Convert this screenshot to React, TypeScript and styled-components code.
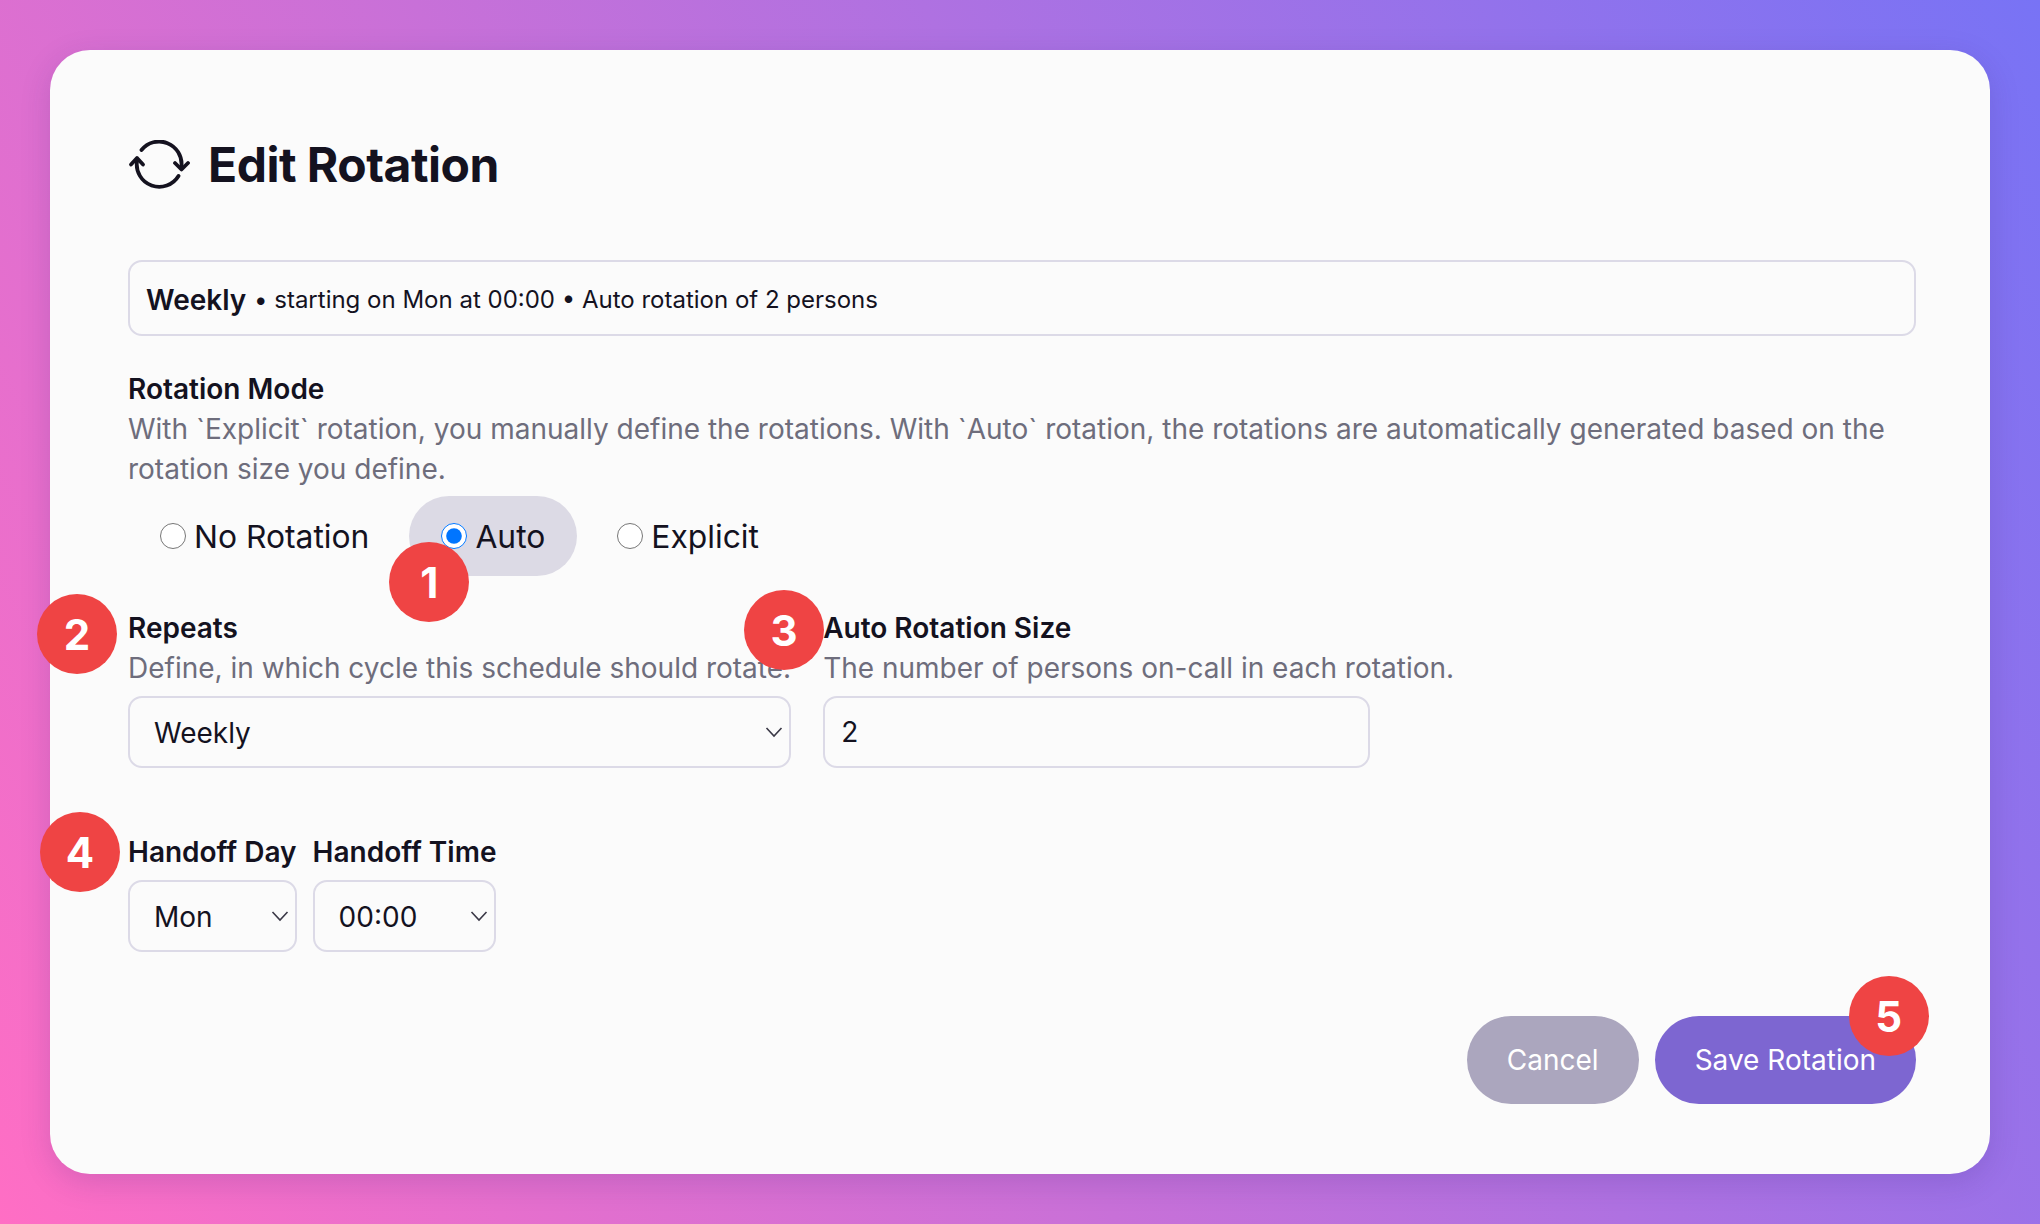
import styled, { createGlobalStyle } from 'styled-components';

const INK = '#14121f';
const MUTED = '#6e6d7c';
const LINE = '#dcdae7';

const GlobalStyle = createGlobalStyle`
  html, body {
    margin: 0;
    padding: 0;
  }
  body {
    font-family: 'Inter', 'Liberation Sans', sans-serif;
    color: ${INK};
  }
  * {
    box-sizing: border-box;
  }
`;

const Page = styled.div`
  width: 2040px;
  height: 1224px;
  padding: 50px;
  background: linear-gradient(60deg, #ff6ec4, #7873f5);
`;

const Card = styled.div`
  height: 1124px;
  padding: 85px 74px 0 78px;
  background: #fbfbfb;
  border-radius: 40px;
  box-shadow: 0 8px 30px rgba(60, 40, 120, 0.18);
`;

const TitleRow = styled.div`
  display: flex;
  align-items: center;
  gap: 18px;
  height: 60px;
  margin-bottom: 65px;
`;

const Title = styled.h1`
  margin: 0;
  font-size: 48px;
  line-height: 58px;
  font-weight: 700;
  letter-spacing: -0.5px;
`;

const Summary = styled.div`
  display: flex;
  align-items: center;
  height: 76px;
  padding: 3px 16px 0;
  border: 2px solid ${LINE};
  border-radius: 14px;
  font-size: 24px;
  white-space: pre;
`;

const SummaryStrong = styled.strong`
  margin-right: 1px;
  font-size: 28px;
  font-weight: 600;
`;

const Label = styled.div`
  font-size: 28px;
  line-height: 40px;
  font-weight: 600;
  white-space: nowrap;
`;

const Hint = styled.div`
  font-size: 28px;
  line-height: 40px;
  color: ${MUTED};
`;

const Section = styled.div`
  margin-top: 33px;
`;

const RadioRow = styled.div`
  display: flex;
  gap: 8px;
  margin-top: 7px;
`;

const RadioItem = styled.label<{ $active?: boolean }>`
  position: relative;
  display: flex;
  align-items: center;
  gap: 8px;
  height: 80px;
  padding: 0 32px;
  border-radius: 40px;
  font-size: 31.8px;
  background: ${({ $active }) => ($active ? '#dcdae5' : 'transparent')};
`;

const RadioInput = styled.input`
  width: 26px;
  height: 26px;
  margin: 0;
`;

const FieldRow = styled.div<{ $gap: number; $top: number }>`
  display: flex;
  gap: ${({ $gap }) => $gap}px;
  margin-top: ${({ $top }) => $top}px;
`;

const Field = styled.div`
  position: relative;
`;

const SelectWrap = styled.div<{ $top: number; $height: number; $width?: number }>`
  position: relative;
  margin-top: ${({ $top }) => $top}px;
  height: ${({ $height }) => $height}px;
  width: ${({ $width }) => ($width ? `${$width}px` : 'auto')};
`;

const Select = styled.select`
  appearance: none;
  width: 100%;
  height: 100%;
  padding: 2px 24px 0;
  background: transparent;
  border: 2px solid ${LINE};
  border-radius: 14px;
  font-family: inherit;
  font-size: 28px;
  color: ${INK};
`;

const NumberInput = styled.input`
  display: block;
  width: 100%;
  height: 100%;
  padding: 0 16px;
  background: transparent;
  border: 2px solid ${LINE};
  border-radius: 14px;
  font-family: inherit;
  font-size: 28px;
  color: ${INK};
`;

const Chevron = styled.svg`
  position: absolute;
  right: 7px;
  top: 50%;
  width: 20px;
  height: 12px;
  transform: translateY(-50%);
  pointer-events: none;
`;

const Actions = styled.div`
  display: flex;
  justify-content: flex-end;
  gap: 16px;
  margin-top: 64px;
`;

const Button = styled.button<{ $primary?: boolean }>`
  position: relative;
  height: 88px;
  padding: 0 40px;
  border: 0;
  border-radius: 44px;
  font-family: inherit;
  font-size: 28px;
  color: #fff;
  background: ${({ $primary }) => ($primary ? '#7d66d1' : '#aba6be')};
`;

const Badge = styled.span<{ $left: number; $top: number }>`
  position: absolute;
  left: ${({ $left }) => $left}px;
  top: ${({ $top }) => $top}px;
  display: flex;
  align-items: center;
  justify-content: center;
  width: 80px;
  height: 80px;
  border-radius: 50%;
  background: #ef4444;
  color: #fff;
  font-size: 42px;
  font-weight: 700;
  z-index: 2;
`;

function RotateIcon() {
  return (
    <svg width="62" height="50" viewBox="-1.5 1 62 50" fill="none" stroke={INK} strokeWidth="3.8" strokeLinecap="round" strokeLinejoin="round">
      <path d="M12 11 A22.5 22.5 0 0 1 52 27" />
      <path d="M45.5 24 L52 30.5 L58.5 24" />
      <path d="M49 37 A22.5 22.5 0 0 1 7.5 22" />
      <path d="M1.5 25.5 L7.5 19 L13.5 25.5" />
    </svg>
  );
}

function ChevronDown() {
  return (
    <Chevron viewBox="0 0 20 12" fill="none" stroke="#3a3846" strokeWidth="1.6">
      <path d="M2.5 2 L10 10 L17.5 2" />
    </Chevron>
  );
}

function PlainSelect({ value, top = 8, height = 72 }: { value: string; top?: number; height?: number }) {
  return (
    <SelectWrap $top={top} $height={height}>
      <Select defaultValue={value}>
        <option>{value}</option>
      </Select>
      <ChevronDown />
    </SelectWrap>
  );
}

export default function App() {
  return (
    <>
      <GlobalStyle />
      <Page>
        <Card>
          <TitleRow>
            <RotateIcon />
            <Title>Edit Rotation</Title>
          </TitleRow>

          <Summary>
            <SummaryStrong>Weekly</SummaryStrong> • starting on Mon at 00:00 • Auto rotation of 2 persons
          </Summary>

          <Section>
            <Label>Rotation Mode</Label>
            <Hint>
              With `Explicit` rotation, you manually define the rotations. With `Auto` rotation, the rotations are automatically generated based on the rotation size you define.
            </Hint>
            <RadioRow>
              <RadioItem>
                <RadioInput type="radio" name="mode" />
                No Rotation
              </RadioItem>
              <RadioItem $active>
                <RadioInput type="radio" name="mode" defaultChecked />
                Auto
                <Badge $left={-20} $top={46}>1</Badge>
              </RadioItem>
              <RadioItem>
                <RadioInput type="radio" name="mode" />
                Explicit
              </RadioItem>
            </RadioRow>
          </Section>

          <FieldRow $gap={32} $top={32}>
            <Field>
              <Badge $left={-91} $top={-14}>2</Badge>
              <Label>Repeats</Label>
              <Hint>Define, in which cycle this schedule should rotate.</Hint>
              <PlainSelect value="Weekly" />
            </Field>
            <Field>
              <Badge $left={-79} $top={-18}>3</Badge>
              <Label>Auto Rotation Size</Label>
              <Hint>The number of persons on-call in each rotation.</Hint>
              <SelectWrap $top={8} $height={72} $width={547}>
                <NumberInput type="text" defaultValue="2" />
              </SelectWrap>
            </Field>
          </FieldRow>

          <FieldRow $gap={16} $top={64}>
            <Field>
              <Badge $left={-88} $top={-20}>4</Badge>
              <Label>Handoff Day</Label>
              <PlainSelect value="Mon" />
            </Field>
            <Field>
              <Label>Handoff Time</Label>
              <PlainSelect value="00:00" />
            </Field>
          </FieldRow>

          <Actions>
            <Button>Cancel</Button>
            <Button $primary>
              Save Rotation
              <Badge $left={194} $top={-40}>5</Badge>
            </Button>
          </Actions>
        </Card>
      </Page>
    </>
  );
}
